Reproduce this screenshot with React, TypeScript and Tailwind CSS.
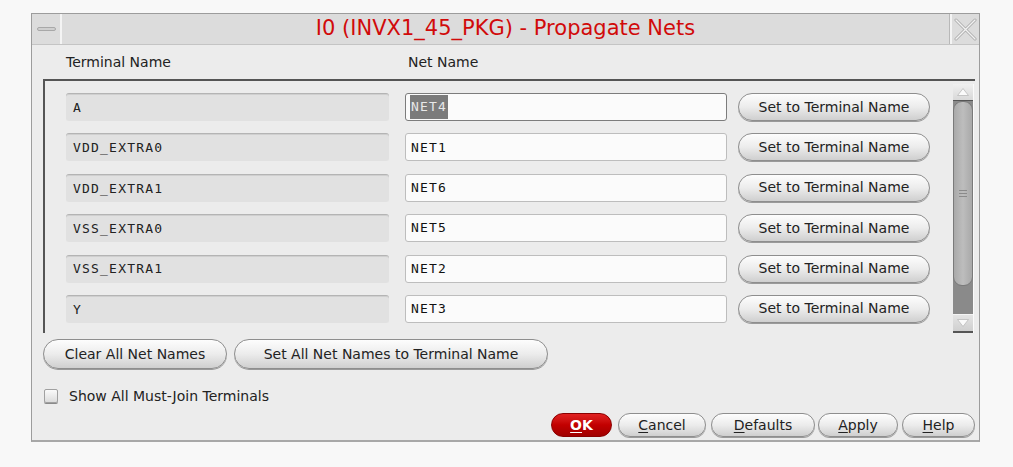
import React from "react";

const rows = [
  { t: "A", n: "NET4", sel: true },
  { t: "VDD_EXTRA0", n: "NET1" },
  { t: "VDD_EXTRA1", n: "NET6" },
  { t: "VSS_EXTRA0", n: "NET5" },
  { t: "VSS_EXTRA1", n: "NET2" },
  { t: "Y", n: "NET3" },
];

const sans = "font-['DejaVu_Sans',sans-serif]";
const mono = "font-['DejaVu_Sans_Mono',monospace]";

function PillButton({ className = "", children }: { className?: string; children: React.ReactNode }) {
  return (
    <div
      className={`flex items-center justify-center rounded-full border border-[#8e8e8e] bg-gradient-to-b from-[#fdfdfd] via-[#ececec] to-[#cfcfcf] shadow-[0_1px_0_#9a9a9a] text-[14px] text-[#222] ${sans} ${className}`}
    >
      {children}
    </div>
  );
}

export default function App() {
  return (
    <div className="w-[1013px] h-[467px] bg-[#f8f8f8] pt-[13px] pl-[31px]">
      <div className="w-[949px] h-[429px] border border-[#9c9c9c] border-b-2 border-b-[#a8a8a8] bg-[#ececec] flex flex-col">
        {/* Title bar */}
        <div className="h-[31px] flex bg-[#dcdcdc] border-b border-[#c4c4c4]">
          <div className="w-[30px] h-full border-r-2 border-[#f4f4f4] flex items-center justify-center">
            <div className="w-[19px] h-[4px] rounded-[2px] bg-[#cfcfcf] border border-[#a8a8a8]" />
          </div>
          <div className={`flex-1 flex items-center justify-center text-[21px] text-[#d10a0a] ${sans} border-r border-[#b8b8b8]`}>
            I0 (INVX1_45_PKG) - Propagate Nets
          </div>
          <div className="w-[29px] h-full border-l-2 border-[#f4f4f4] flex items-center justify-center">
            <svg width="23" height="23" viewBox="0 0 23 23">
              <path d="M2 2 L21 21 M21 2 L2 21" stroke="#a8a8a8" strokeWidth="3" strokeLinecap="round" />
              <path d="M2 2 L21 21 M21 2 L2 21" stroke="#f2f2f2" strokeWidth="1.4" strokeLinecap="round" />
            </svg>
          </div>
        </div>

        {/* Headers */}
        <div className={`h-[34px] flex items-center text-[14px] text-[#222] ${sans}`}>
          <div className="ml-[34px] w-[342px]">Terminal Name</div>
          <div>Net Name</div>
        </div>

        {/* List panel */}
        <div className="ml-[11px] w-[932px] h-[254px] border-t-2 border-l-2 border-[#555] flex">
          <div className="pl-[21px] pt-[12px] flex flex-col gap-[12.4px]">
            {rows.map((r) => (
              <div key={r.t} className="flex items-center h-[28px]">
                <div className={`w-[323px] h-[28px] rounded-[3px] bg-[#e1e1e1] border-t border-[#b4b4b4] shadow-[inset_0_1px_0_#cfcfcf] flex items-center pl-[7px] text-[13px] tracking-[1.2px] text-[#222] ${mono}`}>
                  {r.t}
                </div>
                <div className={`ml-[16px] w-[322px] h-[28px] rounded-[3px] bg-[#fbfbfb] border ${r.sel ? "border-[#7c7c7c]" : "border-[#bdbdbd]"} flex items-center pl-[4px] text-[13px] tracking-[1.2px] text-[#111] ${mono}`}>
                  {r.sel ? (
                    <span className="bg-[#7b7b7b] text-[#e8e8e8] h-[24px] flex items-center pl-[1px] pr-[1px]">{r.n}</span>
                  ) : (
                    <span className="pl-[1px]">{r.n}</span>
                  )}
                </div>
                <PillButton className="ml-[11px] w-[192px] h-[28px]">Set to Terminal Name</PillButton>
              </div>
            ))}
          </div>

          {/* Scrollbar */}
          <div className="ml-[23px] mt-[3px] w-[21px] h-[249px] flex flex-col border-r border-[#fafafa]">
            <div className="h-[17px] bg-gradient-to-b from-[#f0f0f0] to-[#d8d8d8] border-b border-[#555] flex items-center justify-center">
              <svg width="12" height="8" viewBox="0 0 12 8">
                <path d="M6 0.5 L11.5 7.5 L0.5 7.5 Z" fill="#fafafa" stroke="#bbb" strokeWidth="0.8" />
              </svg>
            </div>
            <div className="flex-1 bg-[#8a8a8a] relative">
              <div className="absolute left-0 right-0 top-0 h-[185px] rounded-[9px] bg-gradient-to-r from-[#a9a9a9] via-[#bdbdbd] to-[#a9a9a9] border border-[#7a7a7a] flex items-center justify-center">
                <div className="flex flex-col gap-[2px]">
                  <div className="w-[8px] h-[1px] bg-[#8a8a8a]" />
                  <div className="w-[8px] h-[1px] bg-[#8a8a8a]" />
                  <div className="w-[8px] h-[1px] bg-[#8a8a8a]" />
                </div>
              </div>
            </div>
            <div className="h-[19px] bg-gradient-to-b from-[#e4e4e4] to-[#cfcfcf] border-t border-[#f4f4f4] border-b-2 border-b-[#555] flex items-center justify-center">
              <svg width="12" height="8" viewBox="0 0 12 8">
                <path d="M0.5 0.5 L11.5 0.5 L6 7.5 Z" fill="#fafafa" stroke="#bbb" strokeWidth="0.8" />
              </svg>
            </div>
          </div>
        </div>

        {/* Global buttons */}
        <div className="mt-[6px] ml-[11px] flex gap-[7px]">
          <PillButton className="w-[184px] h-[30px]">Clear All Net Names</PillButton>
          <PillButton className="w-[314px] h-[30px]">Set All Net Names to Terminal Name</PillButton>
        </div>

        {/* Checkbox */}
        <div className="mt-[20px] ml-[12px] flex items-center h-[14px]">
          <div className="w-[14px] h-[14px] rounded-[2px] border border-[#a0a0a0] bg-gradient-to-b from-[#fafafa] to-[#dcdcdc] shadow-[0_1px_0_#8a8a8a]" />
          <span className={`ml-[11px] text-[14px] text-[#222] ${sans}`}>Show All Must-Join Terminals</span>
        </div>

        {/* Dialog buttons */}
        <div className="mt-[10px] ml-[519px] flex h-[24px]">
          <div className={`w-[61px] h-[24px] rounded-full bg-gradient-to-b from-[#e02020] via-[#c20000] to-[#a00000] border border-[#8a0000] flex items-center justify-center text-white font-bold text-[14px] ${sans}`}>
            <span><u className="underline-offset-2">O</u>K</span>
          </div>
          <PillButton className="ml-[6px] w-[88px] h-[24px]"><span><u className="underline-offset-2">C</u>ancel</span></PillButton>
          <PillButton className="ml-[5px] w-[104px] h-[24px]"><span><u className="underline-offset-2">D</u>efaults</span></PillButton>
          <PillButton className="ml-[3px] w-[80px] h-[24px]"><span><u className="underline-offset-2">A</u>pply</span></PillButton>
          <PillButton className="ml-[4px] w-[73px] h-[24px]"><span><u className="underline-offset-2">H</u>elp</span></PillButton>
        </div>
      </div>
    </div>
  );
}
